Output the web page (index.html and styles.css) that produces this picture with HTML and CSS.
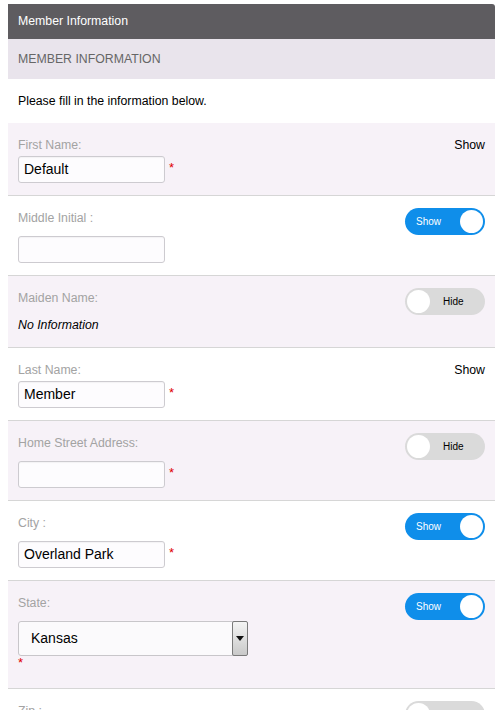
FILE: index.html
```html
<!DOCTYPE html>
<html>
<head>
<meta charset="utf-8">
<link rel="stylesheet" href="styles.css">
</head>
<body>
<div class="panel">
  <div class="title-bar">Member Information</div>
  <div class="section-bar">MEMBER INFORMATION</div>
  <p class="intro">Please fill in the information below.</p>

  <div class="row alt">
    <div class="row-head">
      <span class="label">First Name:</span>
      <span class="plain-show">Show</span>
    </div>
    <div class="field"><div class="input">Default</div><span class="req">*</span></div>
  </div>

  <div class="row">
    <div class="row-head">
      <span class="label">Middle Initial :</span>
      <span class="toggle on"><span class="t-text">Show</span><span class="knob"></span></span>
    </div>
    <div class="field"><div class="input"></div></div>
  </div>

  <div class="row alt">
    <div class="row-head">
      <span class="label">Maiden Name:</span>
      <span class="toggle off"><span class="knob"></span><span class="t-text">Hide</span></span>
    </div>
    <div class="no-info">No Information</div>
  </div>

  <div class="row">
    <div class="row-head">
      <span class="label">Last Name:</span>
      <span class="plain-show">Show</span>
    </div>
    <div class="field"><div class="input">Member</div><span class="req">*</span></div>
  </div>

  <div class="row alt">
    <div class="row-head">
      <span class="label">Home Street Address:</span>
      <span class="toggle off"><span class="knob"></span><span class="t-text">Hide</span></span>
    </div>
    <div class="field"><div class="input"></div><span class="req">*</span></div>
  </div>

  <div class="row">
    <div class="row-head">
      <span class="label">City :</span>
      <span class="toggle on"><span class="t-text">Show</span><span class="knob"></span></span>
    </div>
    <div class="field"><div class="input">Overland Park</div><span class="req">*</span></div>
  </div>

  <div class="row alt">
    <div class="row-head">
      <span class="label">State:</span>
      <span class="toggle on"><span class="t-text">Show</span><span class="knob"></span></span>
    </div>
    <div class="select">
      <span class="select-value">Kansas</span>
      <span class="select-btn"><span class="arrow"></span></span>
    </div>
    <div class="req-below">*</div>
  </div>

  <div class="row">
    <div class="row-head">
      <span class="label">Zip :</span>
      <span class="toggle off"><span class="knob"></span><span class="t-text">Hide</span></span>
    </div>
    <div class="field"><div class="input"></div><span class="req">*</span></div>
  </div>
</div>
</body>
</html>
```

FILE: styles.css
```css
html, body {
  background: #ffffff;
}
body {
  margin: 4px 6px 0 8px;
  font-family: "Liberation Sans", Arial, sans-serif;
  font-size: 12px;
  color: #000;
}
.panel {
  width: 487px;
}
.title-bar {
  background: #5e5c60;
  color: #ffffff;
  height: 35px;
  line-height: 35px;
  padding-left: 10px;
  font-size: 12.3px;
  border-top-right-radius: 3px;
}
.section-bar {
  background: #e9e4ec;
  color: #666666;
  height: 40px;
  line-height: 40px;
  padding-left: 10px;
  font-size: 12.3px;
}
.intro {
  margin: 0;
  padding: 15px 10px;
  line-height: 14px;
  font-size: 12.3px;
  color: #000;
}
.row {
  padding: 12px 10px 12px 10px;
  border-bottom: 1px solid #d6d6d6;
  background: #ffffff;
}
.row.alt {
  background: #f7f2f8;
}
.row-head {
  display: flex;
  justify-content: space-between;
  align-items: flex-start;
}
.label {
  color: #a3a3a3;
  font-size: 12.3px;
  line-height: 16px;
  padding-top: 2px;
}
.plain-show {
  color: #000;
  font-size: 12.3px;
  line-height: 16px;
  padding-top: 2px;
}
.toggle {
  display: flex;
  align-items: center;
  width: 80px;
  height: 27px;
  border-radius: 14px;
  box-sizing: border-box;
  margin-bottom: -2px;
  font-size: 10px;
}
.toggle.on {
  background: #0f8eea;
  color: #ffffff;
  justify-content: space-between;
  padding: 0 2px 0 11px;
}
.toggle.off {
  background: #dadada;
  color: #000;
  padding: 0 2px;
}
.toggle.off .t-text {
  margin-left: 13px;
}
.knob {
  width: 23px;
  height: 23px;
  border-radius: 50%;
  background: #ffffff;
}
.field {
  display: flex;
  align-items: center;
  margin-top: 3px;
}
.input {
  width: 147px;
  height: 27px;
  box-sizing: border-box;
  border: 1px solid #cdcbd0;
  border-radius: 3px;
  background: #fdfcfe;
  box-shadow: inset 0 1px 1px rgba(0,0,0,0.04);
  padding-left: 5px;
  font-size: 14px;
  line-height: 25px;
  color: #000;
}
.req {
  color: #e00000;
  font-size: 13px;
  margin-left: 4px;
  margin-top: -4px;
}
.no-info {
  font-style: italic;
  line-height: 20px;
  margin-top: 2px;
  font-size: 12.3px;
}
.select {
  display: flex;
  justify-content: space-between;
  width: 230px;
  height: 35px;
  box-sizing: border-box;
  margin-top: 3px;
  border: 1px solid #c8c6ca;
  border-radius: 3px;
  background: #fbfafc;
}
.select-value {
  font-size: 14px;
  line-height: 33px;
  padding-left: 12px;
}
.select-btn {
  width: 16px;
  margin: -1px -1px -1px 0;
  box-sizing: border-box;
  border: 1px solid #7a7a7a;
  border-radius: 2px;
  background: linear-gradient(#f4f4f4, #c9c9c9);
  display: flex;
  align-items: center;
  justify-content: center;
}
.arrow {
  width: 0;
  height: 0;
  border-left: 4px solid transparent;
  border-right: 4px solid transparent;
  border-top: 5px solid #111;
}
.req-below {
  color: #e00000;
  font-size: 13px;
  line-height: 14px;
  height: 14px;
  margin-bottom: 6px;
}
```
